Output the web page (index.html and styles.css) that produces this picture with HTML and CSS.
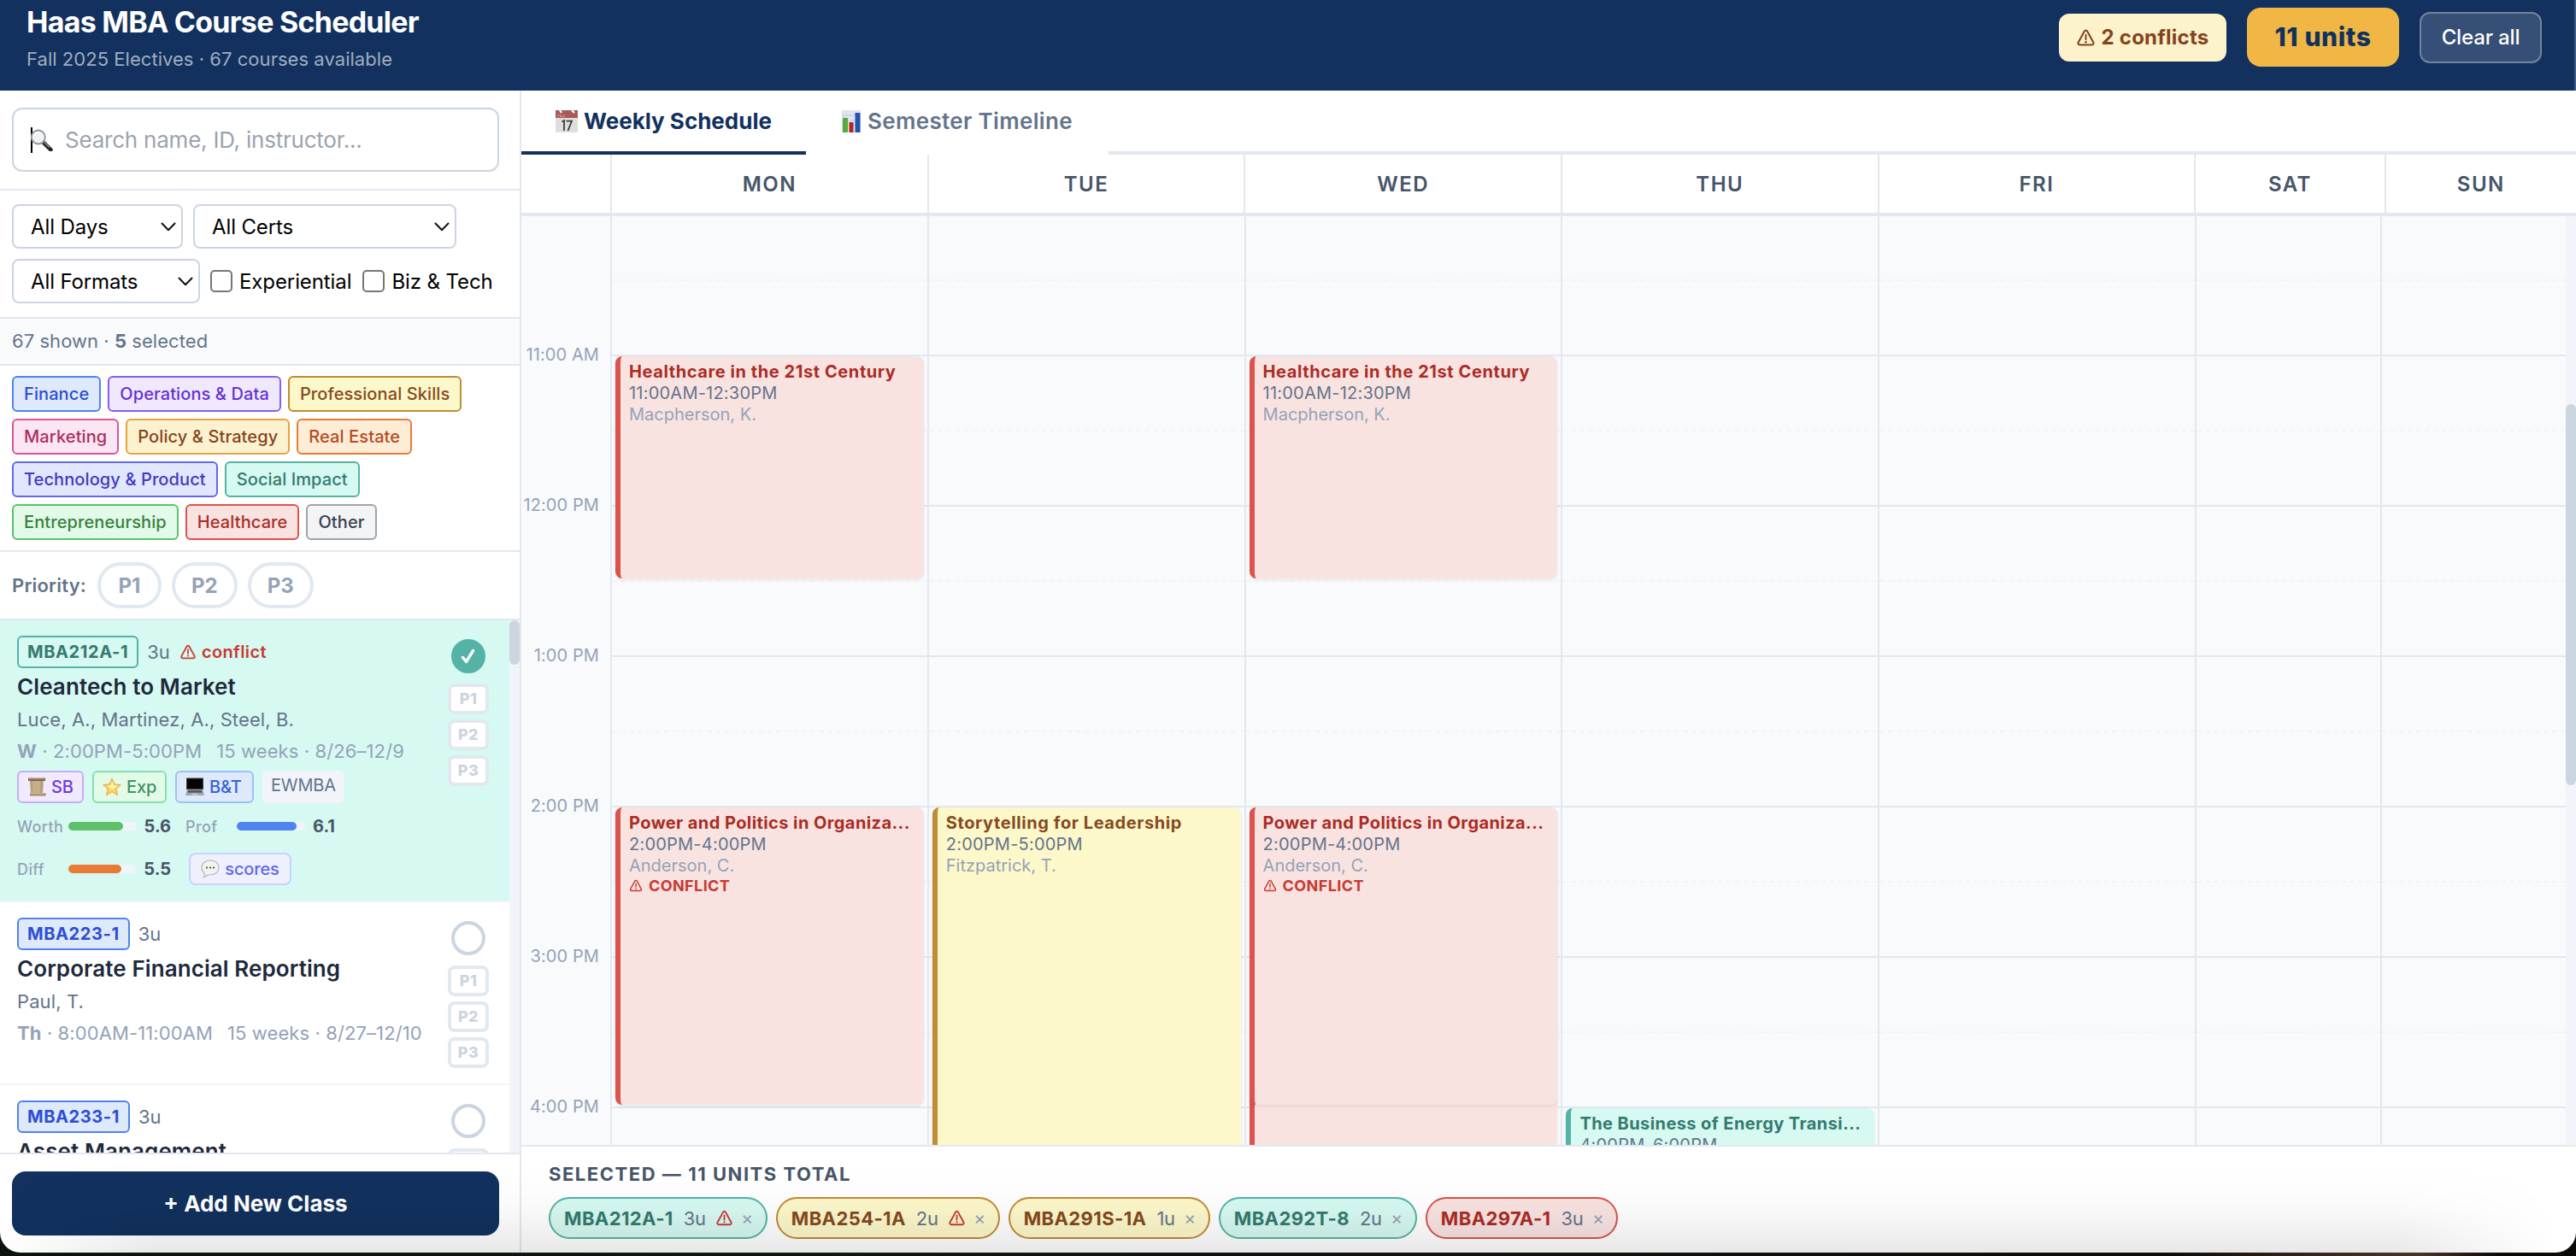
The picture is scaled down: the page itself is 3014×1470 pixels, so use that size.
FILE: index.html
```html
<!DOCTYPE html>
<html lang="en">
<head>
<meta charset="utf-8">
<title>Haas MBA Course Scheduler</title>
<link rel="stylesheet" href="styles.css">
</head>
<body>
<svg width="0" height="0" class="defs" aria-hidden="true">
  <symbol id="warn" viewBox="0 0 20 20">
    <path d="M10 1.9c.7 0 1.3.4 1.7 1.1l6.6 12.2c.8 1.5 0 2.9-1.6 2.9H3.3c-1.6 0-2.4-1.4-1.6-2.9L8.3 3c.4-.7 1-1.1 1.7-1.1z" fill="none" stroke="currentColor" stroke-width="2"/>
    <path d="M10 6.8v5.4" stroke="currentColor" stroke-width="1.9" stroke-linecap="round"/>
    <circle cx="10" cy="15" r="1.15" fill="currentColor"/>
  </symbol>
  <symbol id="chev" viewBox="0 0 18 11">
    <path d="M1.5 1.5L9 9.3l7.500-7.800" fill="none" stroke="#111" stroke-width="2" stroke-linecap="round" stroke-linejoin="round"/>
  </symbol>
</svg>
<div class="window">
  <header class="topbar">
    <div class="brand">
      <h1>Haas MBA Course Scheduler</h1>
      <p>Fall 2025 Electives · 67 courses available</p>
    </div>
    <div class="actions">
      <span class="conflicts"><svg class="warn"><use href="#warn"/></svg>2 conflicts</span>
      <span class="units">11 units</span>
      <button class="clear">Clear all</button>
    </div>
  </header>
  <div class="layout">
    <aside class="sidebar">
      <div class="search-area">
        <div class="search">
          <span class="caret"><svg width="26" height="26" viewBox="0 0 26 26">
            <path d="M15.500 16.500l8 7.800" stroke="#23272b" stroke-width="4.600" stroke-linecap="round"/>
            <path d="M15.500 15.500l6.500 6" stroke="#8d959c" stroke-width="1.200"/>
            <circle cx="8.800" cy="9.500" r="8" fill="#f0f2f4" stroke="#8a949d" stroke-width="1.800"/>
            <path d="M4 8c1-3 3.500-4.200 6-3.800" stroke="#fff" stroke-width="2" fill="none"/>
          </svg></span>
          <span class="placeholder">Search name, ID, instructor...</span>
        </div>
      </div>
      <div class="filters">
        <div class="filter-row">
          <div class="select days">All Days<svg><use href="#chev"/></svg></div>
          <div class="select certs">All Certs<svg><use href="#chev"/></svg></div>
        </div>
        <div class="filter-row">
          <div class="select formats">All Formats<svg><use href="#chev"/></svg></div>
          <label class="check"><i></i>Experiential</label>
          <label class="check"><i></i>Biz &amp; Tech</label>
        </div>
      </div>
      <div class="stats">67 shown · <b>5</b> selected</div>
      <div class="chips">
        <span class="chip blue">Finance</span>
        <span class="chip violet">Operations &amp; Data</span>
        <span class="chip yellow">Professional Skills</span>
        <span class="chip pink">Marketing</span>
        <span class="chip amber">Policy &amp; Strategy</span>
        <span class="chip orange">Real Estate</span>
        <span class="chip indigo">Technology &amp; Product</span>
        <span class="chip teal">Social Impact</span>
        <span class="chip green">Entrepreneurship</span>
        <span class="chip red">Healthcare</span>
        <span class="chip gray">Other</span>
      </div>
      <div class="priority">
        <span class="priority-label">Priority:</span>
        <button>P1</button><button>P2</button><button>P3</button>
      </div>
      <div class="list">
        <div class="cards">
          <article class="card selected">
            <div class="info">
              <div class="code-row"><span class="code teal">MBA212A-1</span><span class="u">3u</span><span class="conflict"><svg class="warn"><use href="#warn"/></svg>conflict</span></div>
              <h2>Cleantech to Market</h2>
              <p class="who">Luce, A., Martinez, A., Steel, B.</p>
              <p class="when"><span><b>W</b> · 2:00PM-5:00PM</span><span>15 weeks · 8/26–12/9</span></p>
              <div class="tags">
                <span class="tag sb"><svg width="22" height="22" viewBox="0 0 22 22"><path d="M3 3h16l-1 16H4z" fill="#b89e78"/><path d="M6 4h9v15H6z" fill="#c6ae88"/><path d="M1 .5h20v3.500H1z" fill="#80664a"/><path d="M2 1h18v1H2z" fill="#b49a76"/><path d="M3 18.300h18.500v3.200H3z" fill="#a38a66"/><path d="M3 18.300h17v1H3z" fill="#d6c3a0"/></svg>SB</span>
                <span class="tag exp"><svg width="22" height="22" viewBox="0 0 22 22"><path d="M11 1l3 6.900 7.200.6-5.500 4.800 1.800 7.200L11 16.600l-6.500 3.900 1.800-7.200L.8 8.500 8 7.900z" fill="#fbd45a" stroke="#e2a544" stroke-width="1" stroke-linejoin="round"/><path d="M11 4l1.800 5 5 .5-4 3.500-3 1-5-4.500 4-.5z" fill="#fff3b0"/></svg>Exp</span>
                <span class="tag bt"><svg width="22" height="22" viewBox="0 0 22 22"><path d="M1 .5h20V14H1z" fill="#3a3d42"/><path d="M2 1.500h18V13H2z" fill="#050505"/><path d="M2 14h18l2 7H0z" fill="#a2a5a9"/><path d="M3 15h16l.8 2.800H2.200z" fill="#55585c"/><path d="M8 18.500h6l.4 2H7.600z" fill="#c8cacc"/></svg>B&amp;T</span>
                <span class="tag ew">EWMBA</span>
              </div>
              <div class="scores">
                <span class="score"><em>Worth</em><span class="bar"><i class="g" style="width:80%"></i></span><b>5.6</b></span>
                <span class="score"><em>Prof</em><span class="bar"><i class="b" style="width:87%"></i></span><b>6.1</b></span>
              </div>
              <div class="scores second">
                <span class="score"><em>Diff</em><span class="bar"><i class="o" style="width:78.600%"></i></span><b>5.5</b></span>
                <button class="score-btn"><svg width="22" height="22" viewBox="0 0 22 22"><path d="M11 .8c5.800 0 10 3.700 10 8.600S16.800 18 11 18c-1 0-2-.1-2.900-.4-1.300 1.700-3 2.900-5.100 3.400 1-1.300 1.500-2.700 1.500-4.500C2.300 14.900 1 12.500 1 9.400 1 4.500 5.200.8 11 .8z" fill="#f2f2f1" stroke="#b9b9b6" stroke-width="1.200"/><g fill="#444"><circle cx="7" cy="9.500" r="1.100"/><circle cx="11" cy="9.500" r="1.100"/><circle cx="15" cy="9.500" r="1.100"/></g></svg>scores</button>
              </div>
            </div>
            <div class="side"><span class="pick on"><svg width="18" height="20" viewBox="0 0 18 20"><path d="M2.500 11.500l4 5L14.500 3.500" fill="none" stroke="#fff" stroke-width="3.400" stroke-linecap="round" stroke-linejoin="round"/></svg></span><span class="p">P1</span><span class="p">P2</span><span class="p">P3</span></div>
          </article>
          <article class="card">
            <div class="info">
              <div class="code-row"><span class="code blue">MBA223-1</span><span class="u">3u</span></div>
              <h2>Corporate Financial Reporting</h2>
              <p class="who">Paul, T.</p>
              <p class="when"><span><b>Th</b> · 8:00AM-11:00AM</span><span>15 weeks · 8/27–12/10</span></p>
            </div>
            <div class="side"><span class="pick"></span><span class="p">P1</span><span class="p">P2</span><span class="p">P3</span></div>
          </article>
          <article class="card">
            <div class="info">
              <div class="code-row"><span class="code blue">MBA233-1</span><span class="u">3u</span></div>
              <h2>Asset Management</h2>
            </div>
            <div class="side"><span class="pick"></span><span class="p"></span></div>
          </article>
        </div>
        <div class="track"><i class="thumb"></i></div>
      </div>
      <div class="add"><button>+ Add New Class</button></div>
    </aside>
    <main class="main">
      <nav class="tabs">
        <span class="tab active"><svg width="26" height="26" viewBox="0 0 26 26"><path d="M0 0h26v26H0z" fill="#dedede"/><path d="M0 0h26v9H0z" fill="#a85b59"/><path d="M5 0l2 3M19 0l3 3" stroke="#fff" stroke-width="2.200"/><path d="M3 5v2.500M5.500 5v2.500h2M9 5v2.500h2" stroke="#d5a5a3" stroke-width="1" fill="none"/><path d="M7.500 13.500L10 12v12M12.500 12.700h6.500L14.500 24" fill="none" stroke="#3c3c3c" stroke-width="1.800"/></svg>Weekly Schedule</span>
        <span class="tab idle"><svg width="22" height="26" viewBox="0 0 22 26"><path d="M0 0h22v26H0z" fill="#dfe5ee"/><path d="M0 6h22M0 12h22M0 18h22" stroke="#c5cedb"/><path d="M1 9h6v17H1z" fill="#55ab3b"/><path d="M8.500 14h5v12h-5z" fill="#b3261d"/><path d="M15.500 3h6v23h-6z" fill="#2453b4"/></svg>Semester Timeline</span>
      </nav>
      <div class="day-head">
        <span></span><span>MON</span><span>TUE</span><span>WED</span><span>THU</span><span>FRI</span><span>SAT</span><span>SUN</span>
      </div>
      <div class="cal">
        <div class="grid">
          <div class="times"><span>11:00 AM</span><span>12:00 PM</span><span>1:00 PM</span><span>2:00 PM</span><span>3:00 PM</span><span>4:00 PM</span></div>
          <div class="col"><i></i><i></i><i></i><i></i><i></i><i></i><i></i><i></i><i></i><i></i><i></i><i></i><i></i>
            <div class="event red" style="top:164px;height:260px"><h3>Healthcare in the 21st Century</h3><p>11:00AM-12:30PM</p><p class="prof">Macpherson, K.</p></div>
            <div class="event red" style="top:692px;height:348px"><h3 class="long">Power and Politics in Organiza...</h3><p>2:00PM-4:00PM</p><p class="prof">Anderson, C.</p><p class="flag"><svg class="warn"><use href="#warn"/></svg>CONFLICT</p></div>
          </div>
          <div class="col"><i></i><i></i><i></i><i></i><i></i><i></i><i></i><i></i><i></i><i></i><i></i><i></i><i></i>
            <div class="event yellow" style="top:692px;height:524px"><h3>Storytelling for Leadership</h3><p>2:00PM-5:00PM</p><p class="prof">Fitzpatrick, T.</p></div>
          </div>
          <div class="col"><i></i><i></i><i></i><i></i><i></i><i></i><i></i><i></i><i></i><i></i><i></i><i></i><i></i>
            <div class="event red" style="top:164px;height:260px"><h3>Healthcare in the 21st Century</h3><p>11:00AM-12:30PM</p><p class="prof">Macpherson, K.</p></div>
            <div class="event red" style="top:692px;height:524px"></div>
            <div class="event red" style="top:692px;height:348px"><h3 class="long">Power and Politics in Organiza...</h3><p>2:00PM-4:00PM</p><p class="prof">Anderson, C.</p><p class="flag"><svg class="warn"><use href="#warn"/></svg>CONFLICT</p></div>
          </div>
          <div class="col"><i></i><i></i><i></i><i></i><i></i><i></i><i></i><i></i><i></i><i></i><i></i><i></i><i></i>
            <div class="event teal" style="top:1044px;height:348px"><h3 class="long">The Business of Energy Transi...</h3><p>4:00PM-6:00PM</p></div>
          </div>
          <div class="col"><i></i><i></i><i></i><i></i><i></i><i></i><i></i><i></i><i></i><i></i><i></i><i></i><i></i></div>
          <div class="col"><i></i><i></i><i></i><i></i><i></i><i></i><i></i><i></i><i></i><i></i><i></i><i></i><i></i></div>
          <div class="col"><i></i><i></i><i></i><i></i><i></i><i></i><i></i><i></i><i></i><i></i><i></i><i></i><i></i></div>
        </div>
        <div class="track"><i class="thumb"></i></div>
      </div>
      <div class="picked">
        <h4>SELECTED — 11 UNITS TOTAL</h4>
        <div class="pills">
          <span class="pill teal"><b>MBA212A-1</b><span>3u</span><svg class="warn"><use href="#warn"/></svg><s>×</s></span>
          <span class="pill yellow"><b>MBA254-1A</b><span>2u</span><svg class="warn"><use href="#warn"/></svg><s>×</s></span>
          <span class="pill yellow"><b>MBA291S-1A</b><span>1u</span><s>×</s></span>
          <span class="pill teal"><b>MBA292T-8</b><span>2u</span><s>×</s></span>
          <span class="pill red"><b>MBA297A-1</b><span>3u</span><s>×</s></span>
        </div>
      </div>
    </main>
  </div>
  <div class="shade"></div>
</div>
</body>
</html>
```
FILE: styles.css
```css
* { box-sizing: border-box; }
body {
  margin: 0; height: 1470px; overflow: hidden;
  background: linear-gradient(90deg, #0b130f 0, #0f1612 30%, #14100c 62%, #0c0b0a 84%, #3d2a1e 91%, #4a3325 94%, #0b0907 97%, #0b0907);
  font-family: Inter, "Liberation Sans", sans-serif; font-size: 22px; color: #64748b;
}
h1, h2, h3, h4, p { margin: 0; }
button { font: inherit; cursor: pointer; }
.defs { position: absolute; }
svg { display: block; flex: none; }
.window {
  position: relative; height: 1466px; display: flex; flex-direction: column; overflow: hidden;
  background: #fff; border-radius: 0 0 24px 24px;
}
.shade {
  position: absolute; left: 0; right: 0; bottom: 0; height: 96px; pointer-events: none;
  background: linear-gradient(to bottom, transparent, rgba(0,0,0,.02) 45%, rgba(0,0,0,.09));
  mask-image: linear-gradient(90deg, transparent, #000 180px, #000 2800px, transparent 2990px);
}

/* Top bar */
.topbar {
  flex: none; height: 106px; padding: 0 40px 19px 31px; background: #12315e;
  display: flex; align-items: center; justify-content: space-between;
  box-shadow: inset -2px 0 rgba(255,255,255,.2);
}
.brand { padding-top: 2px; display: flex; flex-direction: column; gap: 9px; }
.brand h1 { font-size: 34px; line-height: 40px; font-weight: 700; letter-spacing: -.75px; color: #fff; }
.brand p { line-height: 28px; letter-spacing: .04px; color: #a0adbf; }
.actions { display: flex; align-items: center; gap: 24px; }
.conflicts {
  width: 196px; height: 56px; border-radius: 12px; background: #fcf2cc; color: #85431d;
  display: flex; align-items: center; justify-content: center; gap: 8px;
  font-size: 24px; font-weight: 700; letter-spacing: .24px;
}
.conflicts .warn { width: 21px; height: 24px; }
.units {
  width: 178px; height: 69px; line-height: 69px; border-radius: 16px; text-align: center;
  background: #f0b745; color: #12315e; font-size: 30px; font-weight: 800; letter-spacing: .6px;
}
.clear {
  width: 143px; height: 60px; padding: 0; border: 2px solid rgba(255,255,255,.3); border-radius: 12px;
  background: rgba(255,255,255,.15); color: #fff; font-size: 24px; font-weight: 500; letter-spacing: -.15px;
}

.layout { flex: 1; min-height: 0; display: flex; }

/* Sidebar */
.sidebar { width: 610px; flex: none; border-right: 2px solid #e2e8f0; display: flex; flex-direction: column; }
.search-area { padding: 20px 24px 20px 14px; border-bottom: 2px solid #e2e8f0; }
.search {
  height: 75px; border: 2px solid #cbd5e1; border-radius: 12px; padding-left: 20px;
  display: flex; align-items: center; gap: 13px;
}
.caret { height: 30px; border-left: 2px solid #000; display: flex; align-items: center; width: 27px; }
.caret svg { margin-left: -2px; }
.placeholder { font-size: 26px; letter-spacing: -.22px; color: #9ca3af; }
.filters { padding: 16px 24px 16px 14px; border-bottom: 2px solid #e2e8f0; display: flex; flex-direction: column; gap: 12px; }
.filter-row { display: flex; align-items: center; gap: 12px; white-space: nowrap; }
.select {
  height: 52px; border: 2px solid #cbd5e1; border-radius: 8px; padding: 0 6px 0 20px;
  display: flex; align-items: center; justify-content: space-between;
  font-size: 24px; letter-spacing: -.12px; color: #000;
}
.select svg { width: 18px; height: 11px; }
.days { width: 200px; }
.certs { width: 308px; }
.formats { width: 220px; }
.check { display: flex; align-items: center; gap: 8px; font-size: 24px; letter-spacing: -.1px; color: #000; }
.check + .check { margin-left: 1px; }
.check i { width: 26px; height: 26px; border: 2px solid #767676; border-radius: 5px; }
.stats { height: 55px; line-height: 52px; padding-left: 14px; letter-spacing: .05px; background: #f8fafc; border-bottom: 2px solid #e2e8f0; }
.chips { padding: 12px 24px 12px 14px; border-bottom: 2px solid #e2e8f0; display: flex; flex-wrap: wrap; gap: 8px; }
.chip {
  height: 42px; line-height: 38px; padding: 0 12px; border: 2px solid; border-radius: 6px;
  font-size: 20px; font-weight: 500; letter-spacing: .1px;
}
.chip.blue { background: #dee9fb; border-color: #4f83ee; color: #2d4ed3; }
.chip.violet { background: #f0e9fe; border-color: #855df1; color: #6530d4; }
.chip.yellow { background: #fdf8ca; border-color: #c08c34; color: #854a1e; }
.chip.pink { background: #fae7f3; border-color: #dc5597; color: #b02c5c; }
.chip.amber { background: #fcf2cf; border-color: #e8a33d; color: #85431d; }
.chip.orange { background: #fdedd7; border-color: #e97b36; color: #b54a22; }
.chip.indigo { background: #e1e7fe; border-color: #6567ea; color: #4338c4; }
.chip.teal { background: #d6f9f1; border-color: #55b3a6; color: #347a70; }
.chip.green { background: #e2fae8; border-color: #5dc169; color: #38803f; }
.chip.red { background: #f8e3e1; border-color: #dd524c; color: #ab2c25; }
.chip.gray { background: #f3f4f6; border-color: #9da3ae; color: #394150; }
.priority { height: 80px; padding-left: 14px; border-bottom: 2px solid #e2e8f0; display: flex; align-items: center; gap: 12px; }
.priority-label { font-weight: 600; letter-spacing: .2px; width: 88px; }
.priority button {
  height: 54px; min-width: 75px; padding: 0 19px; border: 4px solid #e2e8f0; border-radius: 27px; background: #fff;
  color: #94a3b8; font-size: 24px; font-weight: 700;
}

.list { flex: 1; min-height: 0; display: flex; overflow: hidden; }
.cards { width: 596px; flex: none; }
.track { width: 12px; flex: none; background: #f1f5f9; }
.thumb { display: block; width: 12px; height: 52px; border-radius: 6px; background: #cdd5e1; }
.card { padding: 18px 24px 18px 20px; border-bottom: 2px solid #f1f5f9; display: flex; justify-content: space-between; }
.card.selected { background: #d6f9f1; }
.info { white-space: nowrap; }
.code-row { height: 38px; display: flex; align-items: center; gap: 10px; }
.code {
  height: 38px; line-height: 34px; padding: 0 10px; border: 2px solid; border-radius: 6px;
  font-size: 20px; font-weight: 700; letter-spacing: .6px;
}
.code.teal { border-color: #55b3a6; color: #347a70; }
.code.blue { border-color: #4f83ee; background: #dee9fb; color: #2d4ed3; }
.conflict { margin-left: 2px; display: flex; align-items: center; gap: 7px; font-size: 20px; font-weight: 600; letter-spacing: .37px; color: #c93a32; }
.conflict .warn { width: 18px; height: 18px; }
.card h2 { margin-top: 4px; font-size: 26px; line-height: 36px; font-weight: 600; letter-spacing: .09px; color: #1e293b; }
.who { margin-top: 2px; line-height: 36px; letter-spacing: .11px; }
.when { margin-top: 1px; line-height: 36px; letter-spacing: .1px; color: #94a3b8; display: flex; gap: 17px; }
.tags { margin-top: 5px; display: flex; gap: 10px; }
.tag {
  height: 38px; padding: 0 10px; border: 2px solid; border-radius: 6px;
  display: flex; align-items: center; gap: 6px; font-size: 20px; font-weight: 500; letter-spacing: -.15px;
}
.tag.sb { width: 78px; background: #f1e9fe; border-color: #c1b0f6; color: #7039e2; }
.tag.exp { width: 87px; background: #e2fae8; border-color: #86e0b0; color: #419264; }
.tag.bt { width: 92px; background: #dee9fb; border-color: #9cc1f8; color: #3761e0; }
.tag.ew { width: 96px; border: 0; padding-bottom: 4px; background: #f1f5f9; color: #64748b; font-weight: 400; }
.scores { margin-top: 8px; height: 38px; display: flex; align-items: center; gap: 17px; }
.scores.second { margin-top: 12px; gap: 21px; }
.score { width: 180px; display: flex; align-items: center; }
.score em { width: 60px; font-style: normal; font-size: 18px; font-weight: 500; letter-spacing: .4px; color: #94a3b8; }
.bar { width: 80px; height: 10px; margin-right: 9px; border-radius: 5px; background: #f1f5f9; }
.bar i { display: block; height: 10px; border-radius: 5px; }
.g { background: #5dc169; }
.b { background: #4f83ee; }
.o { background: #e97b36; }
.score b { font-size: 20px; color: #475569; }
.score-btn {
  width: 120px; height: 38px; padding: 0; border: 2px solid #c7d2fe; border-radius: 8px; background: #eef0fe;
  display: flex; align-items: center; justify-content: center; gap: 6px;
  font-size: 20px; font-weight: 500; letter-spacing: -.15px; color: #6567ea;
}
.side { width: 48px; padding-top: 4px; display: flex; flex-direction: column; align-items: center; gap: 6px; }
.pick {
  width: 40px; height: 40px; margin-bottom: 6px; border: 4px solid #cbd5e1; border-radius: 50%; background: #fff;
  display: flex; align-items: center; justify-content: center;
}
.pick.on { border-color: #55b3a6; background: #55b3a6; }
.p {
  width: 48px; height: 36px; line-height: 28px; border: 4px solid #e2e8f0; border-radius: 8px; background: #fff;
  text-align: center; font-size: 18px; font-weight: 800; letter-spacing: .4px; color: #cbd5e1;
}
.add { flex: none; padding: 20px 24px 20px 14px; border-top: 2px solid #e2e8f0; }
.add button { width: 100%; height: 75px; border: 0; border-radius: 16px; background: #12315e; color: #fff; font-size: 26px; font-weight: 700; }

/* Calendar */
.main { flex: 1; min-width: 0; display: flex; flex-direction: column; }
.tabs { flex: none; height: 75px; border-bottom: 4px solid #e2e8f0; display: flex; }
.tab {
  height: 75px; padding: 0 40px; border-bottom: 4px solid #fff; display: flex; align-items: center; gap: 7px;
  white-space: nowrap; font-size: 26px; font-weight: 700; color: #12315e;
}
.tab.active { width: 333px; border-color: #12315e; }
.tab.idle { width: 354px; padding: 0 0 0 42px; gap: 8px; color: #64748b; font-weight: 600; letter-spacing: .34px; }
.day-head {
  flex: none; height: 72px; border-bottom: 4px solid #e2e8f0;
  display: grid; grid-template-columns: 106px repeat(5, 1fr) .6fr .6fr;
}
.day-head span {
  border-right: 2px solid #e2e8f0; text-align: center; line-height: 70px;
  font-size: 24px; font-weight: 600; letter-spacing: 1.500px; color: #475569;
}
.day-head span:last-child { border-right: 0; }
.cal { flex: none; height: 1087px; display: flex; overflow: hidden; background: #f8fafc; }
.cal .thumb { margin-top: 220px; height: 446px; }
.grid { width: 2392px; display: grid; grid-template-columns: 106px repeat(5, 370.800px) 217px 215px; }
.times { height: 1087px; overflow: hidden; padding: 152px 13px 0 0; border-right: 2px solid #e2e8f0; }
.times span {
  display: flex; justify-content: flex-end; height: 176px; line-height: 20px;
  white-space: nowrap; font-size: 20px; letter-spacing: .1px; color: #94a3b8;
}
.col { position: relative; height: 1087px; overflow: hidden; border-right: 2px solid #e2e8f0; }
.col:last-child { border-right: 0; }
.col > i { display: block; height: 88px; border-bottom: 2px solid #e2e8f0; }
.col > i:nth-of-type(odd) { border-bottom: 2px dashed #f1f5f9; }
.col > i:first-child { height: 76px; }
.event {
  position: absolute; left: 4px; right: 4px; padding: 6px 10px; overflow: hidden; white-space: nowrap;
  border-left: 6px solid; border-radius: 8px; box-shadow: 0 2px 4px rgba(0,0,0,.07);
}
.event h3 { font-size: 20px; line-height: 25px; font-weight: 700; letter-spacing: .58px; }
.event h3.long { letter-spacing: .42px; }
.event p { font-size: 20px; line-height: 25px; letter-spacing: .22px; color: #64748b; }
.event .prof { color: #94a3b8; letter-spacing: 0; }
.event .flag { display: flex; align-items: center; gap: 7px; font-size: 18px; line-height: 21px; font-weight: 700; letter-spacing: .4px; color: #c93a32; }
.flag .warn { width: 16px; height: 15px; }
.event.red { background: #f8e3e1; border-color: #dd524c; }
.event.red h3 { color: #ab2c25; }
.event.yellow { background: #fdf8ca; border-color: #c08c34; }
.event.yellow h3 { color: #854a1e; }
.event.teal { background: #d6f9f1; border-color: #55b3a6; }
.event.teal h3 { color: #347a70; }

/* Selected courses */
.picked { flex: 1; padding: 20px 32px 0; border-top: 2px solid #e2e8f0; }
.picked h4 { font-size: 22px; line-height: 24px; font-weight: 700; letter-spacing: 1.540px; color: #475569; }
.pills { margin-top: 15px; display: flex; gap: 10px; }
.pill {
  height: 49px; padding: 0 16px; border: 2px solid; border-radius: 25px;
  display: flex; align-items: center; gap: 12px; font-size: 22px;
}
.pill b { letter-spacing: .4px; }
.pill span { color: #64748b; letter-spacing: -.3px; }
.pill .warn { width: 19px; height: 19px; color: #c93a32; }
.pill s { text-decoration: none; width: 11px; display: flex; justify-content: center; font-size: 21px; color: #94a3b8; }
.pill.teal { background: #d6f9f1; border-color: #55b3a6; color: #347a70; }
.pill.yellow { background: #fdf8ca; border-color: #c08c34; color: #854a1e; }
.pill.red { background: #f8e3e1; border-color: #dd524c; color: #ab2c25; }
```
